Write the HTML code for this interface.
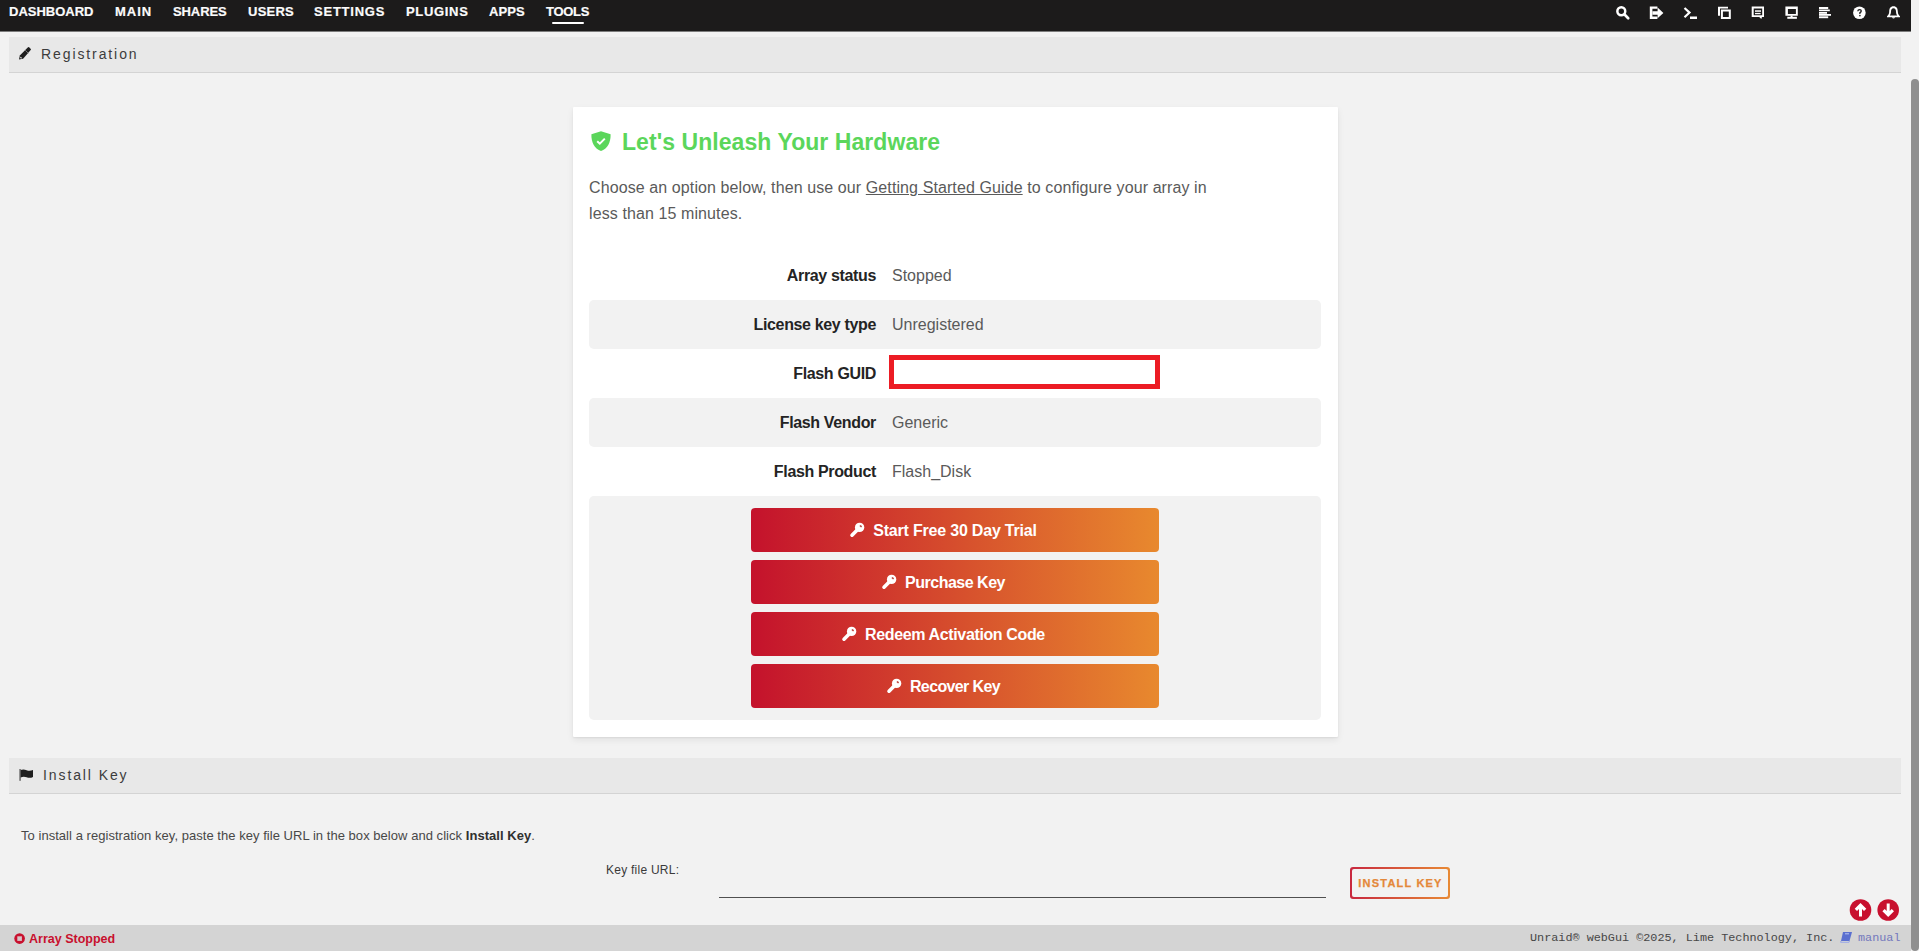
<!DOCTYPE html>
<html>
<head>
<meta charset="utf-8">
<style>
html,body{margin:0;padding:0;}
body{width:1919px;height:951px;overflow:hidden;background:#f2f2f2;position:relative;font-family:"Liberation Sans",sans-serif;color:#1c1c1c;}
.abs{position:absolute;}
#hdr{left:0;top:0;width:1911px;height:31px;background:#1c1b1b;box-shadow:0 1px 0 #7c7c7c;}
.nav{position:absolute;top:5px;font:bold 13px/13px "Liberation Sans",sans-serif;color:#fbfbfb;-webkit-text-stroke:0.2px #fbfbfb;white-space:nowrap;}
.ico{position:absolute;top:6px;}
#sb{left:1911px;top:0;width:8px;height:951px;background:#f2f2f2;}
#thumb{left:1911px;top:79px;width:8px;height:872px;background:#8f8f8f;border-radius:4px;}
.tbar{position:absolute;left:9px;width:1892px;height:35px;background:#e8e8e8;border-bottom:1px solid #d4d4d4;}
.ttxt{position:absolute;font:14px/14px "Liberation Sans",sans-serif;letter-spacing:1.9px;color:#3c3c3c;white-space:nowrap;}
#card{left:573px;top:107px;width:765px;height:630px;background:#fff;border-radius:1px;box-shadow:0 3px 7px rgba(0,0,0,.07),0 1px 2px rgba(0,0,0,.06);}
.row{position:absolute;left:16px;width:732px;height:49px;border-radius:5px;}
.gray{background:#f2f2f2;}
.lbl{position:absolute;right:445px;top:17px;letter-spacing:-0.35px;font:bold 16px/16px "Liberation Sans",sans-serif;color:#242424;white-space:nowrap;}
.val{position:absolute;left:303px;top:17px;font:16px/16px "Liberation Sans",sans-serif;color:#5a5a5a;white-space:nowrap;}
.btn{position:absolute;left:162px;width:408px;height:44px;border-radius:4px;background:linear-gradient(90deg,#c4122c 0%,#e8892e 100%);}
.btxt{position:absolute;left:0;right:0;top:15px;text-align:center;font:bold 16px/16px "Liberation Sans",sans-serif;letter-spacing:-0.2px;color:#fff;white-space:nowrap;}
.bt{position:relative;display:inline-block;}
.key{position:absolute;right:100%;margin-right:8px;top:-1px;}
</style>
</head>
<body>
<div id="hdr" class="abs"></div>
<div class="nav" style="left:9px;letter-spacing:0px">DASHBOARD</div>
<div class="nav" style="left:115px;letter-spacing:1.0px">MAIN</div>
<div class="nav" style="left:173px;letter-spacing:-0.1px">SHARES</div>
<div class="nav" style="left:248px;letter-spacing:0.25px">USERS</div>
<div class="nav" style="left:314px;letter-spacing:0.77px">SETTINGS</div>
<div class="nav" style="left:406px;letter-spacing:0.67px">PLUGINS</div>
<div class="nav" style="left:489px;letter-spacing:0.13px">APPS</div>
<div class="nav" style="left:546px;letter-spacing:-0.28px">TOOLS</div>
<div class="abs" style="left:552px;top:21.5px;width:32px;height:2.6px;background:#fff;border-radius:2px"></div>


<svg class="abs" style="left:1610px;top:0" width="300" height="31" viewBox="1610 0 300 31" fill="#fff" stroke="none">
  <!-- search -->
  <circle cx="1621.3" cy="11.3" r="3.95" fill="none" stroke="#fff" stroke-width="2.5"/>
  <path d="M1624.8 14.8 L1628.2 18.2" stroke="#fff" stroke-width="2.7" stroke-linecap="round"/>
  <!-- sign out -->
  <path d="M1649.8 6.4 H1657.4 V8.7 H1652.4 V16.4 H1657.4 V19 H1649.8 Z"/>
  <path d="M1652.4 11.2 H1657.6 V7.6 L1663.4 12.9 L1657.6 18.2 V14.8 H1652.4 Z"/>
  <!-- terminal -->
  <path d="M1684.5 8 L1689.5 12.6 L1684.5 17.2" fill="none" stroke="#fff" stroke-width="2.2"/>
  <rect x="1690" y="16.5" width="7" height="2.5"/>
  <!-- clone -->
  <path d="M1718 6.7 H1728 V8.5 H1720 V15.8 H1718 Z"/>
  <path d="M1720.9 9.4 H1730.8 V19.1 H1720.9 Z M1722.9 11.4 V17.1 H1728.8 V11.4 Z" fill-rule="evenodd"/>
  <!-- comment -->
  <path d="M1751.7 6.4 H1764 V17 H1762 L1761.3 19 L1759.2 17 H1751.7 Z M1753.7 8.5 V15.2 H1762.2 V8.5 Z" fill-rule="evenodd"/>
  <rect x="1755" y="10.3" width="6" height="1.5"/>
  <rect x="1755" y="12.9" width="5.6" height="1.3"/>
  <!-- desktop -->
  <path d="M1785.4 6.4 H1797.8 V15.8 H1785.4 Z M1787.9 9 V14 H1795.9 V9 Z" fill-rule="evenodd"/>
  <rect x="1790.6" y="15.5" width="2" height="1.6"/>
  <rect x="1787.3" y="16.8" width="9.6" height="2"/>
  <!-- lines -->
  <rect x="1819" y="7" width="9.2" height="2"/>
  <rect x="1819" y="9.5" width="10.8" height="1.7"/>
  <rect x="1819" y="12" width="8" height="1.8"/>
  <rect x="1819" y="14" width="12" height="1.8"/>
  <rect x="1819" y="16.3" width="9.2" height="1.9"/>
  <!-- help -->
  <circle cx="1859.4" cy="12.75" r="6.3"/>
  <path d="M1857.8 11.2 Q1857.9 9.6 1859.6 9.6 Q1861.3 9.6 1861.2 11.1 Q1861.1 12.1 1859.9 12.7 V13.9" fill="none" stroke="#1c1b1b" stroke-width="1.3"/>
  <rect x="1859.2" y="14.9" width="1.4" height="1.4" fill="#1c1b1b"/>
  <!-- bell -->
  <path fill-rule="evenodd" d="M1893.5 6.3 C1890.3 6.3 1889.2 8.8 1889.2 11.5 C1889.2 14 1888 15.2 1887 16.2 V17.3 H1900 V16.2 C1899 15.2 1897.8 14 1897.8 11.5 C1897.8 8.8 1896.7 6.3 1893.5 6.3 Z M1893.5 8.2 C1891.8 8.2 1891 9.6 1891 11.6 C1891 13.6 1890.4 14.8 1889.8 15.5 H1897.2 C1896.6 14.8 1896 13.6 1896 11.6 C1896 9.6 1895.2 8.2 1893.5 8.2 Z"/>
  <path d="M1891.8 17.3 Q1893.5 19.8 1895.2 17.3 Z"/>
</svg>
<div id="sb" class="abs"></div>
<div id="thumb" class="abs"></div>

<div class="tbar" style="top:37px"></div>
<svg class="abs" style="left:14px;top:44px" width="24" height="20" viewBox="0 0 24 20">
  <path d="M5 15.6 L5.84 11.5 L13.97 3.37 Q14.6 2.8 15.3 3.4 L16.6 4.7 Q17.3 5.4 16.7 6.1 L9.1 14.76 Z" fill="#1e1e1e"/>
  <path d="M11.2 6.2 L14.4 9.4" stroke="#9a9a9a" stroke-width="0.7"/>
  <ellipse cx="7" cy="13.7" rx="1" ry="0.7" transform="rotate(45 7 13.7)" fill="#d8d8d8"/>
</svg>
<div class="ttxt" style="left:41px;top:47px">Registration</div>

<div id="card" class="abs">
  <svg class="abs" style="left:18px;top:24px" width="20" height="20" viewBox="0 0 20 20">
    <path d="M10 0.2 L19.6 3.3 C19.9 11.5 16.2 18.2 10 19.9 C3.8 18.2 0.1 11.5 0.4 3.3 Z" fill="#5bd65b"/>
    <path d="M6.2 10.2 L8.8 12.7 L13.8 7.6" fill="none" stroke="#fff" stroke-width="2"/>
  </svg>
  <div class="abs" id="h1" style="left:49px;top:24px;letter-spacing:0.06px;font:bold 23px/23px 'Liberation Sans',sans-serif;color:#5bd65b;white-space:nowrap">Let's Unleash Your Hardware</div>
  <div class="abs" id="para" style="left:16px;top:68px;width:640px;font:16px/26px 'Liberation Sans',sans-serif;color:#5a5a5a;letter-spacing:0.1px">Choose an option below, then use our <span style="text-decoration:underline;text-underline-offset:1px;">Getting Started Guide</span> to configure your array in<br>less than 15 minutes.</div>
  <div class="abs" style="left:316px;top:248px;width:261px;height:24px;border:5px solid #ec1c24;"></div>

  <div class="row" style="top:144px"><div class="lbl">Array status</div><div class="val">Stopped</div></div>
  <div class="row gray" style="top:193px"><div class="lbl">License key type</div><div class="val">Unregistered</div></div>
  <div class="row" style="top:242px"><div class="lbl">Flash GUID</div></div>
  <div class="row gray" style="top:291px"><div class="lbl">Flash Vendor</div><div class="val">Generic</div></div>
  <div class="row" style="top:340px"><div class="lbl">Flash Product</div><div class="val">Flash_Disk</div></div>
  <div class="row gray" style="top:389px;height:224px">
    <div class="btn" style="top:12px"><div class="btxt"><span class="bt"><svg class="key" width="16" height="16" viewBox="0 0 16 16"><circle cx="10.6" cy="5.4" r="4.7" fill="#fff"/><path d="M8.2 8 L3 13.2" stroke="#fff" stroke-width="3.6" stroke-linecap="round"/><ellipse cx="11.8" cy="4.2" rx="1.3" ry="0.9" transform="rotate(35 11.8 4.2)" fill="#c0504a"/></svg>Start Free 30 Day Trial</span></div></div>
    <div class="btn" style="top:64px"><div class="btxt" style="letter-spacing:-0.49px"><span class="bt"><svg class="key" width="16" height="16" viewBox="0 0 16 16"><circle cx="10.6" cy="5.4" r="4.7" fill="#fff"/><path d="M8.2 8 L3 13.2" stroke="#fff" stroke-width="3.6" stroke-linecap="round"/><ellipse cx="11.8" cy="4.2" rx="1.3" ry="0.9" transform="rotate(35 11.8 4.2)" fill="#c0504a"/></svg>Purchase Key</span></div></div>
    <div class="btn" style="top:116px"><div class="btxt" style="letter-spacing:-0.37px"><span class="bt"><svg class="key" width="16" height="16" viewBox="0 0 16 16"><circle cx="10.6" cy="5.4" r="4.7" fill="#fff"/><path d="M8.2 8 L3 13.2" stroke="#fff" stroke-width="3.6" stroke-linecap="round"/><ellipse cx="11.8" cy="4.2" rx="1.3" ry="0.9" transform="rotate(35 11.8 4.2)" fill="#c0504a"/></svg>Redeem Activation Code</span></div></div>
    <div class="btn" style="top:168px"><div class="btxt" style="letter-spacing:-0.62px"><span class="bt"><svg class="key" width="16" height="16" viewBox="0 0 16 16"><circle cx="10.6" cy="5.4" r="4.7" fill="#fff"/><path d="M8.2 8 L3 13.2" stroke="#fff" stroke-width="3.6" stroke-linecap="round"/><ellipse cx="11.8" cy="4.2" rx="1.3" ry="0.9" transform="rotate(35 11.8 4.2)" fill="#c0504a"/></svg>Recover Key</span></div></div>
  </div>
</div>

<div class="tbar" style="top:758px"></div>
<svg class="abs" style="left:19px;top:768px" width="15" height="14" viewBox="0 0 15 14">
  <rect x="0.5" y="1" width="1.1" height="11.8" fill="#3a3a3a"/>
  <path d="M1.6 2 Q4.6 0.8 7.6 2.2 Q10.8 3.4 14 2 V9 Q10.8 10.6 7.6 9.2 Q4.6 8 1.6 9.4 Z" fill="#1e1e1e"/>
</svg>
<div class="ttxt" style="left:43px;top:768px">Install Key</div>


<div class="abs" style="left:21px;top:829px;font:13px/13px 'Liberation Sans',sans-serif;letter-spacing:0.04px;color:#484848;white-space:nowrap">To install a registration key, paste the key file URL in the box below and click <b style="color:#303030">Install Key</b>.</div>
<div class="abs" style="left:606px;top:864px;font:12px/12px 'Liberation Sans',sans-serif;letter-spacing:0.25px;color:#3a3a3a;white-space:nowrap">Key file URL:</div>
<div class="abs" style="left:719px;top:897px;width:607px;height:1px;background:#505050"></div>
<div class="abs" style="left:1350px;top:867px;width:100px;height:32px;box-sizing:border-box;border-radius:3px;background:linear-gradient(90deg,#c8283f,#e88a35);"><div style="position:absolute;left:2px;top:2px;right:2px;bottom:2px;background:#f2f2f2;border-radius:2px"></div>
<div class="abs" style="left:0;right:0;top:11px;text-align:center;font:bold 11px/11px 'Liberation Sans',sans-serif;letter-spacing:1.2px;color:#e4883a;-webkit-text-stroke:0.25px #e4883a;padding-left:1px;white-space:nowrap">INSTALL KEY</div></div>

<div class="abs" style="left:0;top:925px;width:1911px;height:26px;background:#d4d4d4"></div>
<svg class="abs" style="left:13px;top:932px" width="13" height="13" viewBox="0 0 13 13"><circle cx="6.6" cy="6.6" r="5.3" fill="#c8102e"/><rect x="4.3" y="4.3" width="4.6" height="4.6" fill="#d8c4c8"/></svg>
<div class="abs" style="left:29px;top:933px;font:bold 12.5px/12.5px 'Liberation Sans',sans-serif;color:#c8102e;white-space:nowrap">Array Stopped</div>
<div class="abs" style="left:1530px;top:931.5px;font:11.8px/12px 'Liberation Mono',monospace;color:#474747;white-space:nowrap">Unraid® webGui ©2025, Lime Technology, Inc.</div>
<svg class="abs" style="left:1840px;top:931px" width="13" height="12" viewBox="0 0 13 12"><path d="M3 1 H12 L9.5 10 H1 Z" fill="#5a6fd0"/><path d="M1 10 L0.6 11.3 H9 L9.5 10" fill="none" stroke="#9aa8e8" stroke-width="1"/><rect x="5" y="2.3" width="4" height="1" fill="#b8c4f0"/></svg>
<div class="abs" style="left:1858px;top:931.5px;font:11.8px/12px 'Liberation Mono',monospace;color:#7378bd;white-space:nowrap">manual</div>
<svg class="abs" style="left:1849px;top:899px" width="52" height="24" viewBox="0 0 52 24">
  <circle cx="11.5" cy="11" r="10.8" fill="#c8102e"/>
  <path d="M11.5 4 L17.3 9.8 L15 12 L13 10 V17.5 H10 V10 L8 12 L5.7 9.8 Z" fill="#fff"/>
  <circle cx="39.2" cy="11" r="10.8" fill="#c8102e"/>
  <path d="M39.2 18 L45 12.2 L42.7 10 L40.7 12 V4.5 H37.7 V12 L35.7 10 L33.4 12.2 Z" fill="#fff"/>
</svg>

</body>
</html>
